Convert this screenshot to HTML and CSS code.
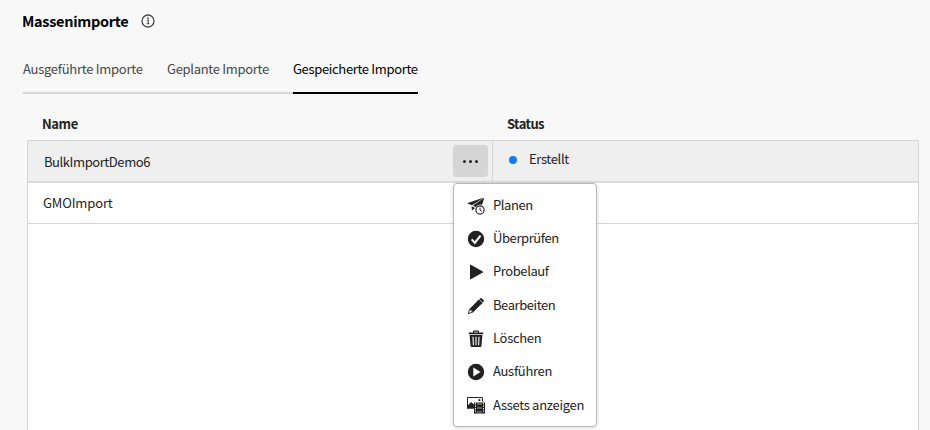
FILE: index.html
```html
<!DOCTYPE html>
<html lang="de">
<head>
<meta charset="utf-8">
<title>Massenimporte</title>
<link rel="stylesheet" href="styles.css">
</head>
<body>
<header class="page-header">
  <h1>Massenimporte</h1>
  <svg class="info" viewBox="0 0 14 14" aria-hidden="true"><circle cx="7" cy="7" r="6" fill="none" stroke="#4b4b4b" stroke-width="1.3"/><path d="M5.8 6.2h1.5v3.5M5.6 9.8h2.8" fill="none" stroke="#4b4b4b" stroke-width="1.1"/><circle cx="7" cy="4.2" r=".9" fill="#4b4b4b"/></svg>
</header>
<nav class="tabs">
  <a class="tab tab-done">Ausgeführte Importe</a>
  <a class="tab tab-planned">Geplante Importe</a>
  <a class="tab tab-saved active">Gespeicherte Importe</a>
</nav>
<main class="table">
  <div class="head"><span class="col-name">Name</span><span class="col-status">Status</span></div>
  <div class="body">
    <div class="row selected">
      <div class="cell name"><span class="bulk">BulkImportDemo6</span>
        <button class="more" aria-label="Mehr"><i></i><i></i><i></i></button>
        <ul class="menu">
          <li><svg viewBox="0 0 18 18"><path d="M0 6.2 17 .6 5 8.2zM6 8.5 17.2.8 15.1 8C12.4 6.7 9.7 8.5 8.9 10.3zM4.6 9.3l3.5 1.6-3.2 2.5z"/><circle cx="13" cy="13" r="4.1" fill="#fff" stroke="#222" stroke-width="1.2"/><path d="M13 10.5V13l2 1.4" fill="none" stroke="#222"/></svg><span class="tight">Planen</span></li>
          <li><svg viewBox="0 0 18 18"><circle cx="9" cy="9" r="8.2"/><path d="m4.7 9.4 3.1 3.4 5.7-7.2" fill="none" stroke="#fff" stroke-width="2.1"/></svg><span class="wide">Überprüfen</span></li>
          <li><svg viewBox="0 0 18 18"><path d="M3 2.3q0-.8.8-.5L15.8 8.5q.8.5 0 1L3.8 16.2Q3 16.5 3 15.7z"/></svg><span class="tight">Probelauf</span></li>
          <li><svg viewBox="0 0 18 18"><path d="m12.3 2.1 1-.9q.7-.6 1.4 0l2 2q.6.7 0 1.4l-1 .9zM11.4 3l3.5 3.5-8.7 8.7-3.5-3.5z"/><path d="M12 2.4l3.6 3.6-2 1.8L10.200 4.400z"/><path d="m2.7 12 3.1 3.1-4.5 1.6z" fill="#fff" stroke="#222" stroke-width=".9"/></svg><span class="tight">Bearbeiten</span></li>
          <li><svg viewBox="0 0 18 18"><path fill-rule="evenodd" d="M6 2.500V1.400Q6 .6 6.800.6h4.400q.8 0 .8.8v1.100h4.200v1.800H1.800V2.500zm1.200 0h3.600v-.8H7.200z"/><path d="M2.6 5h12.800l-1 11.300q-.1.8-.9.8h-9q-.8 0-.9-.8z"/><path d="m6 6.700.4 8.600M9 6.700v8.600m3-8.600-.4 8.600" stroke="#fff" stroke-width="1.1"/></svg><span>Löschen</span></li>
          <li><svg viewBox="0 0 18 18"><circle cx="9" cy="9" r="8.2"/><path d="M6.3 4.6 13.5 9l-7.2 4.4z" fill="#fff"/></svg><span>Ausführen</span></li>
          <li><svg viewBox="0 0 18 18"><path fill="none" stroke="#222" d="M.5 12.500v-11h15v4"/><path d="M1 9.200 4.100 6l3 2.600v4.100H0V9.200z"/><circle cx="12.4" cy="4.2" r="1.1"/><path d="M7 6.500h11v11H7z"/><path d="M8.500 7v10M16.500 7v10" stroke="#fff" stroke-width="1" stroke-dasharray="1.3 1.2"/><path d="M10 8h5m-5 4h5m-5 4h5" stroke="#ccc" stroke-width=".7"/></svg><span>Assets anzeigen</span></li>
        </ul>
      </div>
      <div class="cell status"><b class="dot"></b><span>Erstellt</span></div>
    </div>
    <div class="row"><div class="cell name"><span class="gmo">GMOImport</span></div></div>
  </div>
</main>
</body>
</html>
```
FILE: styles.css
```css
* { box-sizing: border-box; }
body {
  margin: 0;
  height: 430px;
  overflow: hidden;
  display: flex;
  flex-direction: column;
  background: #f8f8f8;
  color: #222;
  font: 13px/20px "Noto Sans CJK JP", sans-serif;
  letter-spacing: -0.3px;
}
.page-header { display: flex; align-items: center; height: 42px; padding-left: 22px; gap: 13px; }
h1 { margin: 0; width: 106px; font-size: 14.5px; line-height: 20px; font-weight: 700; color: #000; white-space: nowrap; }
.info { width: 14px; height: 14px; }
.tabs { display: flex; gap: 24px; height: 52px; margin-left: 23px; align-self: flex-start; border-bottom: 2px solid #d5d5d5; }
.tab { height: 52px; padding-top: 17px; color: #464646; white-space: nowrap; }
.tab-done { width: 120px; letter-spacing: -0.27px; }
.tab-planned { width: 102px; }
.tab-saved { width: 125px; letter-spacing: -0.34px; }
.tab.active { color: #000; border-bottom: 2px solid #000; }
.table { display: flex; flex-direction: column; flex: 1; margin: 0 11px 0 27px; }
.head { display: flex; height: 46px; padding: 20px 0 0 15px; font-weight: 700; letter-spacing: -0.4px; }
.col-name { width: 465px; }
.col-status { letter-spacing: -0.6px; }
.body { flex: 1; background: #fff; border: 1px solid #d5d5d5; border-bottom: 0; border-top-left-radius: 2px; }
.row { display: flex; height: 41px; border-bottom: 1px solid #d5d5d5; }
.row.selected { height: 42px; background: #efefef; border-bottom: 2px solid #dcdcdc; }
.cell { display: flex; align-items: center; }
.name { position: relative; width: 465px; padding: 0 4px 0 15px; justify-content: space-between; }
.selected .name { padding-left: 16px; border-right: 1px solid #d5d5d5; }
.bulk { padding-top: 1px; letter-spacing: -0.42px; }
.gmo { letter-spacing: -0.15px; }
.status { padding-left: 16px; gap: 12px; }
.status span { margin-top: -4px; letter-spacing: -0.36px; }
.dot { width: 8px; height: 8px; margin-top: -3px; border-radius: 50%; background: #147af3; }
.more { display: flex; align-items: center; justify-content: center; gap: 3px; width: 35px; height: 32px; padding: 1px 0 0; border: 0; border-radius: 4px; background: #d5d5d5; }
.more i { width: 3px; height: 3px; border-radius: 50%; background: #222; }
.menu { position: absolute; z-index: 1; left: 425px; top: 42px; width: 144px; height: 244px; margin: 0; padding: 5px 0 0 13px; list-style: none; background: #fff; border: 1px solid #b8b8b8; border-radius: 4px; box-shadow: 0 1px 4px rgba(0,0,0,.15); }
.menu li { display: flex; align-items: center; gap: 8px; height: 33.3px; white-space: nowrap; }
.menu li span { margin-top: -1.6px; }
.menu .tight { letter-spacing: -0.42px; }
.menu .wide { letter-spacing: -0.4px; }
.menu svg { flex: none; width: 18px; height: 18px; fill: #222; }
```
